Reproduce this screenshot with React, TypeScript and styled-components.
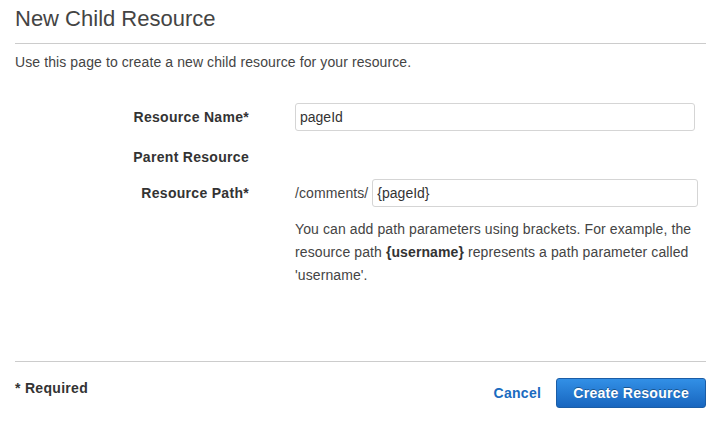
import styled, { createGlobalStyle } from 'styled-components';

const GlobalStyle = createGlobalStyle`
  body {
    margin: 0;
    background: #fff;
    font-family: 'Liberation Sans', Arial, sans-serif;
    font-size: 14px;
    color: #444;
  }
`;

const Page = styled.div`
  padding: 6px 17px 0 15px;
`;

const Header = styled.div`
  padding-bottom: 11px;
  border-bottom: 1px solid #ccc;
`;

const Title = styled.h1`
  margin: 0;
  font-size: 22px;
  line-height: 26px;
  font-weight: normal;
  color: #444;
`;

const Intro = styled.p`
  margin: 8px 0 0;
  line-height: 20px;
  letter-spacing: 0.1px;
`;

const Form = styled.div`
  margin-top: 31px;
  display: flex;
  flex-direction: column;
  gap: 12px;
`;

const Row = styled.div`
  display: grid;
  grid-template-columns: 234px 1fr;
  column-gap: 46px;
  align-items: ${(p: { $top?: boolean }) => (p.$top ? 'start' : 'center')};
`;

const Label = styled.label<{ $pad?: number }>`
  text-align: right;
  font-weight: bold;
  color: #333;
  line-height: 20px;
  letter-spacing: 0.3px;
  padding-top: ${(p) => p.$pad ?? 0}px;
`;

const Input = styled.input<{ $width?: number }>`
  box-sizing: border-box;
  width: ${(p) => (p.$width ? `${p.$width}px` : '100%')};
  height: 28px;
  padding: 0 4px 1px;
  border: 1px solid #d5d5d5;
  border-radius: 3px;
  font-family: inherit;
  font-size: 14px;
  color: #333;
  outline: none;
`;

const PathBox = styled.div`
  width: 403px;
  display: flex;
  align-items: center;
  gap: 4px;
`;

const PathPrefix = styled.span`
  color: #444;
  letter-spacing: 0.1px;
  white-space: nowrap;
`;

const Help = styled.p`
  margin: 11px 0 0 280px;
  width: 400px;
  line-height: 23px;
  letter-spacing: 0.1px;

  strong {
    color: #333;
  }
`;

const Footer = styled.div`
  margin-top: 74px;
  border-top: 1px solid #ccc;
  padding-top: 16px;
  display: flex;
  justify-content: space-between;
  align-items: flex-start;
`;

const Required = styled.div`
  font-weight: bold;
  color: #333;
  line-height: 20px;
  letter-spacing: 0.3px;
`;

const Actions = styled.div`
  display: flex;
  align-items: center;
`;

const LinkButton = styled.button`
  background: none;
  border: none;
  padding: 0 15px;
  height: 30px;
  font-family: inherit;
  font-size: 14px;
  font-weight: bold;
  letter-spacing: 0.3px;
  color: #1a6bc0;
  cursor: pointer;
`;

const PrimaryButton = styled.button`
  box-sizing: border-box;
  height: 30px;
  padding: 0 16px;
  border: 1px solid #1b5da6;
  border-radius: 3px;
  background: linear-gradient(#3290e6, #1866bf);
  font-family: inherit;
  font-size: 14px;
  font-weight: bold;
  letter-spacing: 0.3px;
  color: #fff;
  text-shadow: 0 -1px 0 rgba(0, 0, 0, 0.35);
  cursor: pointer;
`;

export default function App() {
  return (
    <Page>
      <GlobalStyle />
      <Header>
        <Title>New Child Resource</Title>
      </Header>
      <Intro>Use this page to create a new child resource for your resource.</Intro>

      <Form>
        <Row>
          <Label>Resource Name*</Label>
          <Input $width={400} defaultValue="pageId" />
        </Row>
        <Row $top>
          <Label $pad={4}>Parent Resource</Label>
          <span />
        </Row>
        <Row>
          <Label>Resource Path*</Label>
          <PathBox>
            <PathPrefix>/comments/</PathPrefix>
            <Input defaultValue="{pageId}" />
          </PathBox>
        </Row>
      </Form>

      <Help>
        You can add path parameters using brackets. For example, the resource path{' '}
        <strong>{'{username}'}</strong> represents a path parameter called 'username'.
      </Help>

      <Footer>
        <Required>* Required</Required>
        <Actions>
          <LinkButton>Cancel</LinkButton>
          <PrimaryButton>Create Resource</PrimaryButton>
        </Actions>
      </Footer>
    </Page>
  );
}
